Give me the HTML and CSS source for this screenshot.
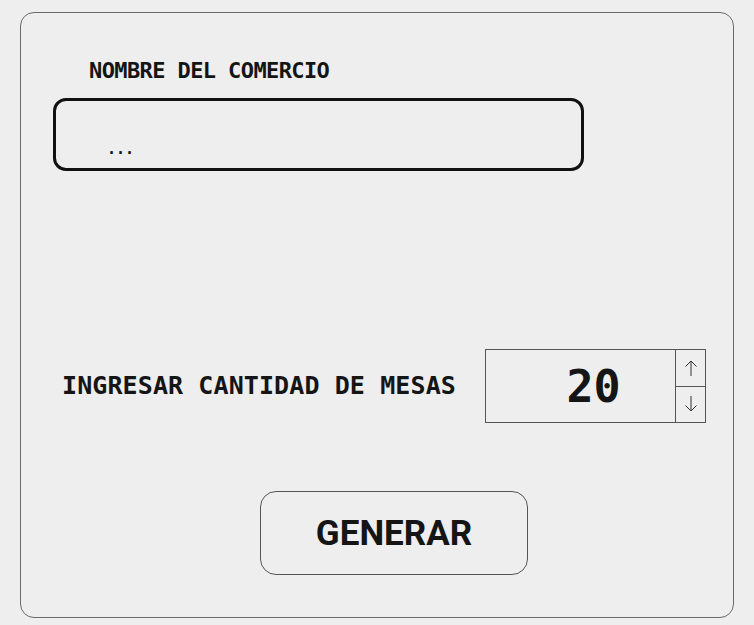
FILE: index.html
```html
<!DOCTYPE html>
<html>
<head>
<meta charset="utf-8">
<link rel="stylesheet" href="styles.css">
</head>
<body>
<div class="card">
  <div class="label">NOMBRE DEL COMERCIO</div>
  <div class="name-input"><span class="placeholder">...</span></div>
  <div class="row">
    <div class="row-label">INGRESAR CANTIDAD DE MESAS</div>
    <div class="number">
      <div class="value">20</div>
      <div class="spinner">
        <div class="spin">
          <svg width="14" height="18" viewBox="0 0 14 18"><path d="M7 17V2M1.5 7.5L7 2l5.5 5.5" fill="none" stroke="#333" stroke-width="1"/></svg>
        </div>
        <div class="spin">
          <svg width="14" height="18" viewBox="0 0 14 18"><path d="M7 1v15M1.5 10.5L7 16l5.5-5.5" fill="none" stroke="#333" stroke-width="1"/></svg>
        </div>
      </div>
    </div>
  </div>
  <div class="button">GENERAR</div>
</div>
</body>
</html>
```
FILE: styles.css
```css
* { box-sizing: border-box; }
html, body { margin: 0; padding: 0; background: #eeeeee; }
body {
  width: 754px;
  height: 625px;
  font-family: "DejaVu Sans Mono", monospace;
  color: #151515;
}
.card {
  margin: 12px 0 0 20px;
  width: 714px;
  height: 606px;
  border: 1.5px solid #6a6a6a;
  border-radius: 14px;
  display: flex;
  flex-direction: column;
  align-items: flex-start;
}
.label {
  margin: 45px 0 0 68px;
  font-size: 22px;
  font-weight: bold;
  line-height: 26px;
  letter-spacing: -0.6px;
}
.name-input {
  margin: 14px 0 0 32px;
  width: 531px;
  height: 73px;
  border: 3px solid #111;
  border-radius: 13px;
  padding: 38px 0 0 51px;
}
.placeholder {
  font-size: 15px;
  font-weight: bold;
  line-height: 20px;
  display: block;
}
.row {
  margin: 178px 0 0 41px;
  display: flex;
  align-items: center;
}
.row-label {
  font-size: 25px;
  font-weight: bold;
  letter-spacing: 0.1px;
  line-height: 28px;
  width: 423px;
}
.number {
  width: 221px;
  height: 74px;
  border: 1px solid #555;
  display: flex;
}
.value {
  flex: 1;
  display: flex;
  align-items: center;
  justify-content: center;
  font-size: 45px;
  font-weight: bold;
  padding-left: 26px;
}
.spinner {
  width: 30px;
  border-left: 1.5px solid #555;
  display: flex;
  flex-direction: column;
}
.spin {
  flex: 1;
  display: flex;
  align-items: center;
  justify-content: center;
}
.spin + .spin { border-top: 1px solid #555; }
.button {
  margin: 68px 0 0 239px;
  width: 268px;
  height: 84px;
  border: 1.2px solid #555;
  border-radius: 16px;
  display: flex;
  align-items: center;
  justify-content: center;
  font-family: Roboto, sans-serif;
  font-weight: 700;
  font-size: 35px;
  color: #151515;
}
```
